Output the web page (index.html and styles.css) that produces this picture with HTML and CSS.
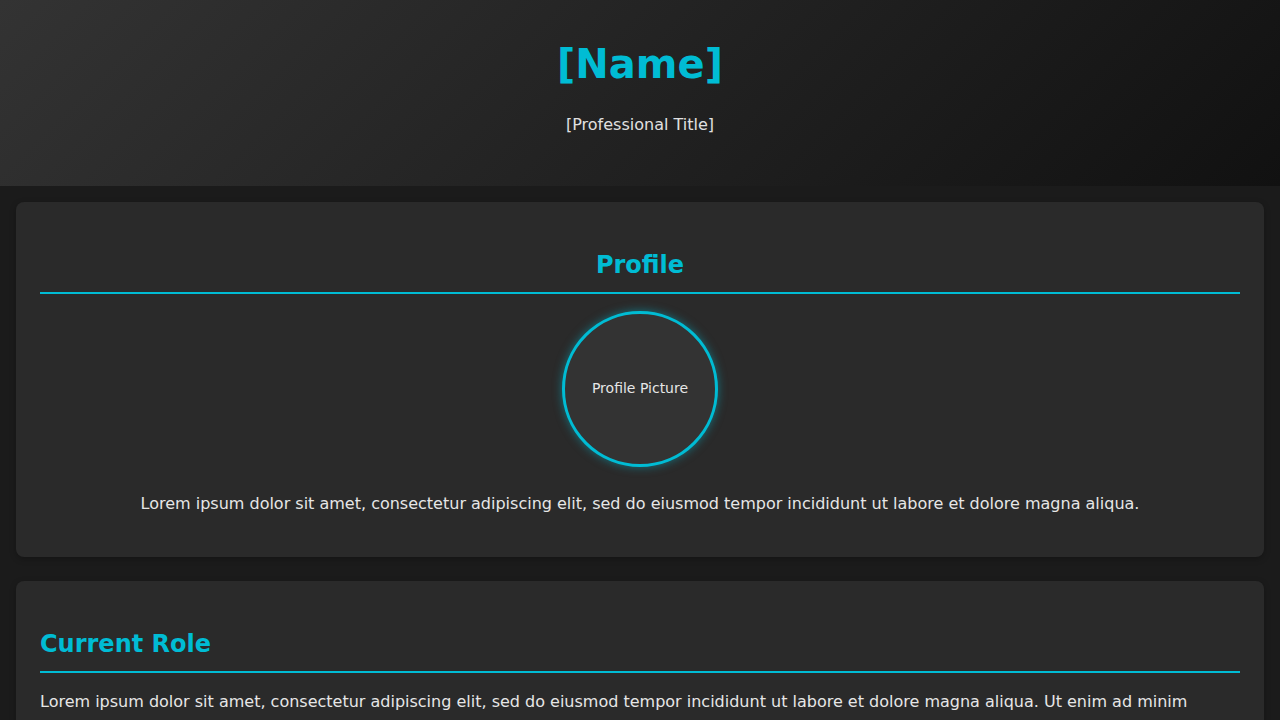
FILE: index.html
```html
<!DOCTYPE html>
<html lang="en">
<head>
<meta charset="utf-8">
<title>[Name]</title>
<link rel="stylesheet" href="styles.css">
</head>
<body>
<header class="hero">
  <h1 class="hero-name">[Name]</h1>
  <p class="hero-title">[Professional Title]</p>
</header>
<main class="content">
  <section class="card card-center">
    <h2 class="card-heading">Profile</h2>
    <div class="avatar"><span class="avatar-label">Profile Picture</span></div>
    <p class="card-text">Lorem ipsum dolor sit amet, consectetur adipiscing elit, sed do eiusmod tempor incididunt ut labore et dolore magna aliqua.</p>
  </section>
  <section class="card">
    <h2 class="card-heading">Current Role</h2>
    <p class="card-text">Lorem ipsum dolor sit amet, consectetur adipiscing elit, sed do eiusmod tempor incididunt ut labore et dolore magna aliqua. Ut enim ad minim veniam, quis nostrud exercitation ullamco laboris nisi ut aliquip ex ea commodo consequat.</p>
  </section>
</main>
</body>
</html>
```
FILE: styles.css
```css
* { box-sizing: border-box; }
html, body {
  margin: 0;
  padding: 0;
}
body {
  background: #1b1b1b;
  color: #e6e6e6;
  font-family: "DejaVu Sans", sans-serif;
  font-size: 16px;
  line-height: 1.6;
}
.hero {
  background: linear-gradient(135deg, #333333 0%, #111111 100%);
  text-align: center;
  padding: 32px 20px;
}
.hero-name {
  margin: 0;
  font-size: 40px;
  font-weight: bold;
  color: #00bcd4;
}
.hero-title {
  margin: 16px 0;
  color: #e0e0e0;
}
.content {
  padding: 16px 16px 0;
}
.card {
  background: #2a2a2a;
  border-radius: 8px;
  padding: 24px;
  margin-bottom: 24px;
  box-shadow: 0 2px 6px rgba(0, 0, 0, 0.25);
}
.card-center {
  text-align: center;
}
.card-heading {
  margin: 20px 0 16px;
  font-size: 24px;
  font-weight: bold;
  color: #00bcd4;
  padding-bottom: 8px;
  border-bottom: 2px solid #00bcd4;
}
.avatar {
  width: 156px;
  height: 156px;
  margin: 17px auto 24px;
  border-radius: 50%;
  border: 3px solid #00bcd4;
  background: #333333;
  box-shadow: 0 0 10px rgba(0, 188, 212, 0.5);
  display: flex;
  align-items: center;
  justify-content: center;
  font-size: 14px;
  color: #e6e6e6;
}
.avatar-label {
  line-height: 1.2;
  margin-bottom: 2px;
}
.card-text {
  margin: 0 0 16px;
}
```
